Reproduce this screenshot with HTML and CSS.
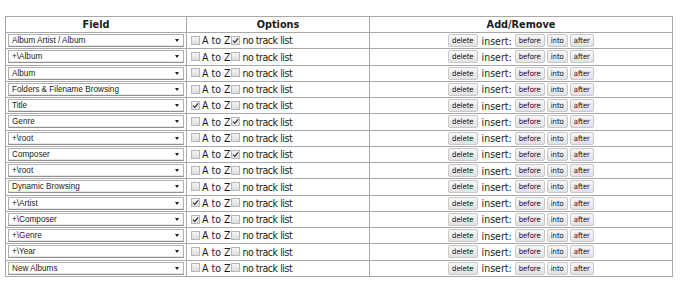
FILE: index.html
```html
<!DOCTYPE html>
<html>
<head>
<meta charset="utf-8">
<link rel="stylesheet" href="styles.css">
</head>
<body>
<table class="views">
  <thead>
    <tr><th class="c-field">Field</th><th class="c-opt">Options</th><th class="c-add">Add/Remove</th></tr>
  </thead>
  <tbody id="rows"></tbody>
</table>
<script src="app.js"></script>
</body>
</html>
```
FILE: app.js
```js
const data = [
  ["Album Artist / Album", false, true],
  ["+\\Album", false, false],
  ["Album", false, false],
  ["Folders & Filename Browsing", false, false],
  ["Title", true, false],
  ["Genre", false, true],
  ["+\\root", false, false],
  ["Composer", false, true],
  ["+\\root", false, false],
  ["Dynamic Browsing", false, false],
  ["+\\Artist", true, false],
  ["+\\Composer", true, false],
  ["+\\Genre", false, false],
  ["+\\Year", false, false],
  ["New Albums", false, false]
];
const tb = document.getElementById('rows');
const cb = c => `<span class="cb${c ? ' on' : ''}">${c ? '<svg viewBox="0 0 9 9" width="9" height="9"><path d="M2 4.6 L3.8 6.4 L7.2 2.4" fill="none" stroke="#333" stroke-width="1.3"/></svg>' : ''}</span>`;
for (const [name, az, nt] of data) {
  const tr = document.createElement('tr');
  tr.innerHTML = `<td class="c-field"><div class="sel"><span class="sel-text"></span><span class="arrow"></span></div></td>
  <td class="c-opt"><label>${cb(az)}A to Z</label><label class="ntl">${cb(nt)}<span>no track list</span></label></td>
  <td class="c-add"><div class="acts"><button>delete</button><span class="ins">insert:</span><button>before</button><button>into</button><button>after</button></div></td>`;
  tr.querySelector('.sel-text').textContent = name;
  tb.appendChild(tr);
}
```
FILE: styles.css
```css
html, body { margin: 0; padding: 0; background: #fff; }
body { padding: 16px 0 0 5px; font-family: "DejaVu Sans Condensed", "DejaVu Sans", sans-serif; color: #1a1a1a; }
.views {
  border-collapse: collapse;
  width: 667px;
  table-layout: fixed;
}
.views th, .views td {
  border: 1px solid #a8a8a8;
  padding: 0;
  height: 16.25px;
  box-sizing: border-box;
}
.views th {
  font-size: 10.8px;
  font-weight: bold;
  text-align: center;
  height: 16px;
}
.c-field { width: 181px; }
.c-opt { width: 183px; }
.c-add { width: 303px; }
.sel {
  display: flex;
  align-items: center;
  justify-content: space-between;
  margin: 0 2px 0 2px;
  height: 13px;
  border: 1px solid #b0b0b0;
  border-bottom-color: #909090;
  box-sizing: border-box;
  background: #fff;
  font-family: "Liberation Sans", Arial, sans-serif;
  font-size: 8.2px;
  padding: 0 4px 0 3px;
  box-shadow: inset 0 -1px 0 #e6e6e6;
}
.arrow {
  width: 0; height: 0;
  border-left: 2.5px solid transparent;
  border-right: 2.5px solid transparent;
  border-top: 3.5px solid #222;
}
td.c-opt {
  font-size: 10.5px;
  white-space: nowrap;
  padding-left: 3px;
}
.c-opt label { display: inline-flex; align-items: center; }
.c-opt .ntl span { letter-spacing: -0.45px; }
.cb {
  display: inline-block;
  width: 7px; height: 7px;
  border: 1px solid #b8b8b8;
  background: linear-gradient(#f4f4f4, #dedede);
  margin: 0 2px 0 1px;
  position: relative;
}
.cb svg { position: absolute; left: -1px; top: -1px; }
.acts {
  display: flex;
  justify-content: center;
  align-items: center;
}
.acts button {
  font-family: "DejaVu Sans Condensed", "DejaVu Sans", sans-serif;
  font-size: 7.6px;
  height: 13px;
  padding: 0 3px;
  border: 1px solid #c8c8c8;
  border-radius: 2px;
  background: linear-gradient(#f7f7f7, #e2e2e2);
  color: #111;
  margin: 0 1px;
  line-height: 11px;
}
.ins { font-size: 10.5px; margin: 0 2px 0 3px; }
```
